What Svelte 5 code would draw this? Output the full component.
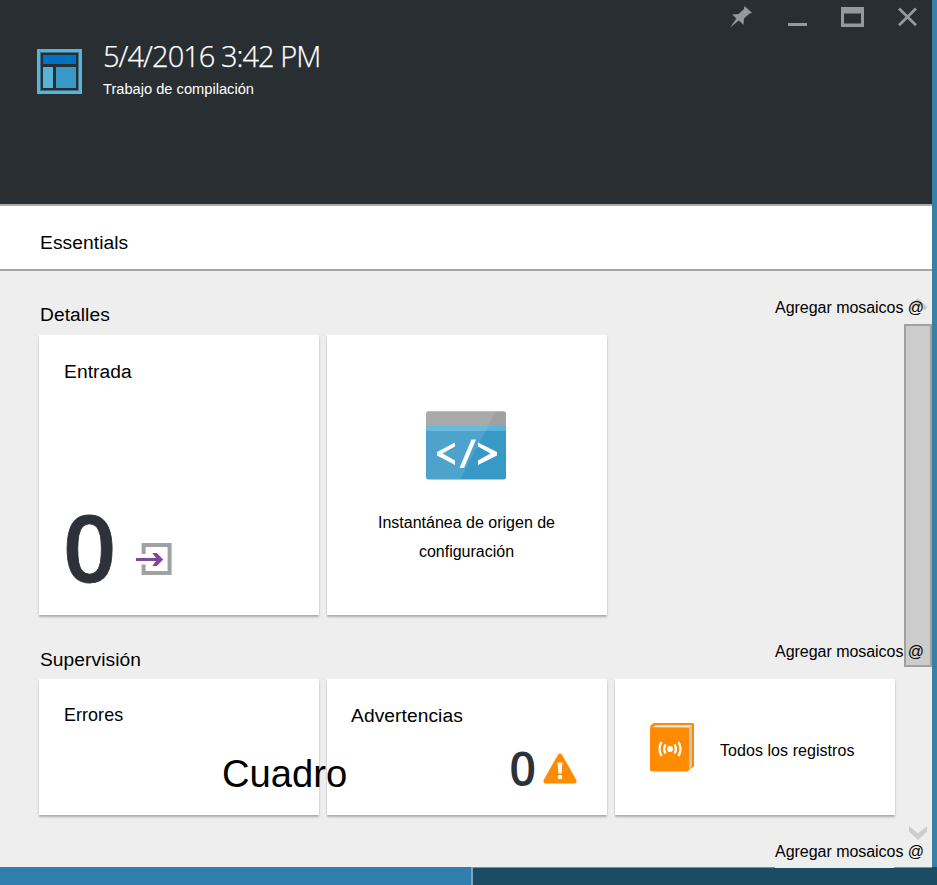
<script>
  const addTiles = 'Agregar mosaicos @';
</script>

<div class="window">
  <div class="blade">
    <header>
      <div class="controls">
        <svg width="200" height="30" viewBox="0 0 200 30" fill="#96999b">
          <path d="M14.5 6L22 12.8L19.7 13.5L13.9 18.4L13.6 24.7L8.7 20.4L0.2 27.5L6.4 18.4L2.2 14.5L8.6 14.1L14 9Z" />
          <rect x="58" y="23" width="19" height="3" />
          <path fill-rule="evenodd" d="M111 7H134V27H111ZM114 13.5V23.5H131V13.5Z" />
          <path d="M169 8.5L186 25.2M186 8.5L169 25.2" stroke="#96999b" stroke-width="2.7" />
        </svg>
      </div>
      <div class="heading">
        <svg width="45" height="45" viewBox="0 0 45 45">
          <rect x="1.5" y="1.5" width="42" height="42" fill="none" stroke="#59b4d9" stroke-width="3" />
          <rect x="3.5" y="3.5" width="38" height="38" fill="none" stroke="#3e7389" />
          <rect x="6" y="6" width="33" height="9" fill="#0072c6" />
          <rect x="6" y="18" width="10" height="21" fill="#59b4d9" />
          <rect x="19" y="18" width="20" height="21" fill="#3999c6" />
        </svg>
        <div class="names">
          <h1>5/4/2016 3:42 PM</h1>
          <p>Trabajo de compilación</p>
        </div>
      </div>
    </header>

    <div class="essentials">Essentials</div>

    <main>
      <div class="scrollbar">
        <svg class="up" width="20" height="14" viewBox="0 0 20 14"><path d="M2 11L10 3L18 11" fill="none" stroke="#ccc" stroke-width="4.5" /></svg>
        <div class="thumb"></div>
        <svg class="down" width="20" height="16" viewBox="0 0 20 16"><path d="M1 1L10 8.5L19 1V6.5L10 15L1 6.5Z" fill="#cdcdcd" /></svg>
      </div>

      <section>
        <div class="section-head"><h2>Detalles</h2><span>{addTiles}</span></div>
        <div class="tiles tall">
          <article class="tile">
            <h3>Entrada</h3>
            <div class="count">
              <b>0</b>
              <svg width="36" height="32" viewBox="0 0 36 32">
                <path d="M7.6 11V2H33.6V30H7.6V21.5" fill="none" stroke="#a0a1a2" stroke-width="4" />
                <path d="M0 15H20L16.3 10H20.8L27.2 16.5L20.8 23H16.3L20 18H0Z" fill="#804998" />
              </svg>
            </div>
          </article>
          <article class="tile source">
            <svg width="80" height="69" viewBox="0 0 80 69">
              <path d="M0 15H80V66Q80 68.5 77.5 68.5H2.5Q0 68.5 0 66Z" fill="#3999c6" />
              <path d="M0 15V2.5Q0 0.3 2.5 0.3H77.5Q80 0.3 80 2.5V15Z" fill="#a0a1a2" />
              <path d="M0 15H80V20H0Z" fill="#59b4d9" />
              <path d="M0 2.5Q0 0.3 2.5 0.3H70L34 68.5H2.5Q0 68.5 0 66Z" fill="#fff" opacity=".1" />
              <path d="M29 31.500V35.500L16.500 42.500L29 49.500V54L11 44.500V41ZM52 31.500V35.500L64.500 42.500L52 49.500V54L71 44.500V41ZM45.500 28.500H50L38 57H33.500Z" fill="#fff" />
            </svg>
            <p>Instantánea de origen de<br />configuración</p>
          </article>
        </div>
      </section>

      <section>
        <div class="section-head"><h2 class="lower">Supervisión</h2><span>{addTiles}</span></div>
        <div class="tiles short">
          <article class="tile errors">
            <h3>Errores</h3>
            <div class="frame-label">Cuadro</div>
          </article>
          <article class="tile warnings">
            <h3>Advertencias</h3>
            <div class="warning">
              <b>0</b>
              <svg width="34" height="31" viewBox="0 0 34 31">
                <path d="M15 1.500Q17 -0.500 19 1.500L33.300 27Q34.300 30.300 31.500 30.500H2.500Q-0.300 30.300 0.700 27Z" fill="#ff8c00" />
                <path d="M14.500 9.500H19.500L18.500 20.500H15.500Z" fill="#fff" />
                <circle cx="17" cy="24" r="2.300" fill="#fff" />
              </svg>
            </div>
          </article>
          <article class="tile logs">
            <svg width="44" height="49" viewBox="0 0 44 49">
              <path d="M4 0H42.500Q44 0 44 1.500V43.500L39 47H0V5Q0 1.500 4 0Z" fill="#ff8c00" />
              <path d="M3 4.500Q4 2 7 2H42L39 5Z" fill="#e5e5e5" />
              <path d="M39 5L42 2V44L39 47.500Z" fill="#c3c4c5" />
              <path d="M0 4.500H37Q39 4.500 39 6.500V46.500Q39 48.500 37 48.500H2Q0 48.500 0 46.500Z" fill="#ff8c00" />
              <circle cx="20" cy="26" r="3" fill="#fff" />
              <path d="M15.500 21.500Q12.800 26 15.500 30.500M24.500 21.500Q27.200 26 24.500 30.500M11.500 19Q7.500 26 11.500 33M28.500 19Q32.500 26 28.500 33" fill="none" stroke="#fff" stroke-width="2.300" />
            </svg>
            <span>Todos los registros</span>
          </article>
        </div>
      </section>

      <div class="last-add"><span>{addTiles}</span></div>
    </main>
  </div>
  <footer><div class="left"></div><div class="right"><i></i><i class="gap"></i><i class="end"></i></div></footer>
</div>

<style>
  * { box-sizing: border-box; }
  h1, h2, h3, p { margin: 0; font-weight: 400; }
  svg { display: block; flex: none; }
  .window { width: 937px; height: 885px; display: flex; flex-direction: column; overflow: hidden; font-family: "Liberation Sans", Arial, sans-serif; font-size: 16px; color: #000; }
  .blade { height: 867px; border-right: 5px solid #3880a5; display: flex; flex-direction: column; }
  header { height: 204px; flex: none; background: #292e32; color: #fff; }
  .controls { height: 34px; display: flex; justify-content: flex-end; padding-right: 2px; }
  .heading { display: flex; padding: 15px 0 0 37px; gap: 21px; }
  .names { margin-top: -13px; white-space: nowrap; }
  h1 { font: 300 29px/40px "Open Sans", sans-serif; letter-spacing: -0.96px; -webkit-text-stroke: 0.25px #fff; }
  .names p { font-size: 14.67px; line-height: 20px; margin-top: 3px; }
  .essentials { height: 67px; flex: none; background: #fff; border-top: 2px solid #aaa; border-bottom: 2px solid #a5a5a5; padding: 3px 40px 0; line-height: 67px; font-size: 19.2px; letter-spacing: 0.08px; }
  main { position: relative; flex: 1; min-height: 0; background: #eee; }
  section { position: relative; padding-left: 39px; }
  .section-head { height: 64px; display: flex; justify-content: space-between; padding-right: 8px; }
  .section-head span { line-height: 20px; margin-top: 27px; }
  .section-head span, .last-add span { letter-spacing: -0.04px; }
  h2 { font-size: 19.2px; line-height: 24px; margin: 32px 0 0 1px; letter-spacing: 0.06px; }
  h2.lower { margin-top: 33px; }
  .tiles { display: flex; gap: 8px; }
  .tall { height: 280px; }
  .short { height: 136px; }
  .tile { position: relative; width: 280px; background: #fff; padding: 25px 25px 0; box-shadow: 0 2px 2px rgba(0, 0, 0, .28); }
  h3 { font-size: 19.2px; line-height: 24px; letter-spacing: 0.08px; }
  .tile.errors { z-index: 1; padding-top: 24px; }
  .errors h3 { font-size: 17.9px; }
  .warnings h3 { margin-left: -1px; }
  .count { display: flex; align-items: flex-end; margin-top: 113px; height: 98px; gap: 21px; }
  b { font-family: "Open Sans", sans-serif; font-weight: 600; color: #2d3239; }
  .count b { font-size: 93px; line-height: 98px; width: 51px; text-indent: -1px; -webkit-text-stroke: 0.8px #2d3239; }
  .count svg { margin-bottom: 20px; }
  .source { display: flex; flex-direction: column; align-items: center; padding: 76px 2px 0 0; text-align: center; }
  .source p { line-height: 29px; margin: 28px 0 0 1px; }
  .frame-label { position: absolute; left: 183px; top: 71px; font-size: 38.2px; line-height: 48px; }
  .warning { display: flex; justify-content: flex-end; align-items: center; height: 50px; gap: 7px; margin-top: 15px; padding-right: 5px; }
  .warning b { font-size: 47px; line-height: 50px; }
  .logs { display: flex; align-items: center; padding: 0 35px; gap: 26px; }
  .logs span { padding-top: 7px; white-space: nowrap; letter-spacing: 0.06px; }
  .last-add { position: relative; display: flex; justify-content: flex-end; padding: 27px 8px 0 0; line-height: 20px; }
  .scrollbar { position: absolute; top: 0; right: 0; width: 28px; height: 100%; }
  .up { position: absolute; top: 27px; left: 4px; }
  .thumb { position: absolute; top: 53px; width: 28px; height: 343px; background: #ccc; border: 2px solid #a0a0a0; }
  .down { position: absolute; top: 554px; left: 4px; }
  footer { height: 18px; display: flex; }
  .left { width: 471px; background: #2f7ead; }
  .right { flex: 1; display: flex; background: #1c4c63; border-left: 2px solid #7fa5b5; }
  .right i { width: 302px; height: 1px; background: #7b8f99; }
  .right i.gap { width: 119px; background: #eee; }
  .right i.end { width: 38px; }
</style>
